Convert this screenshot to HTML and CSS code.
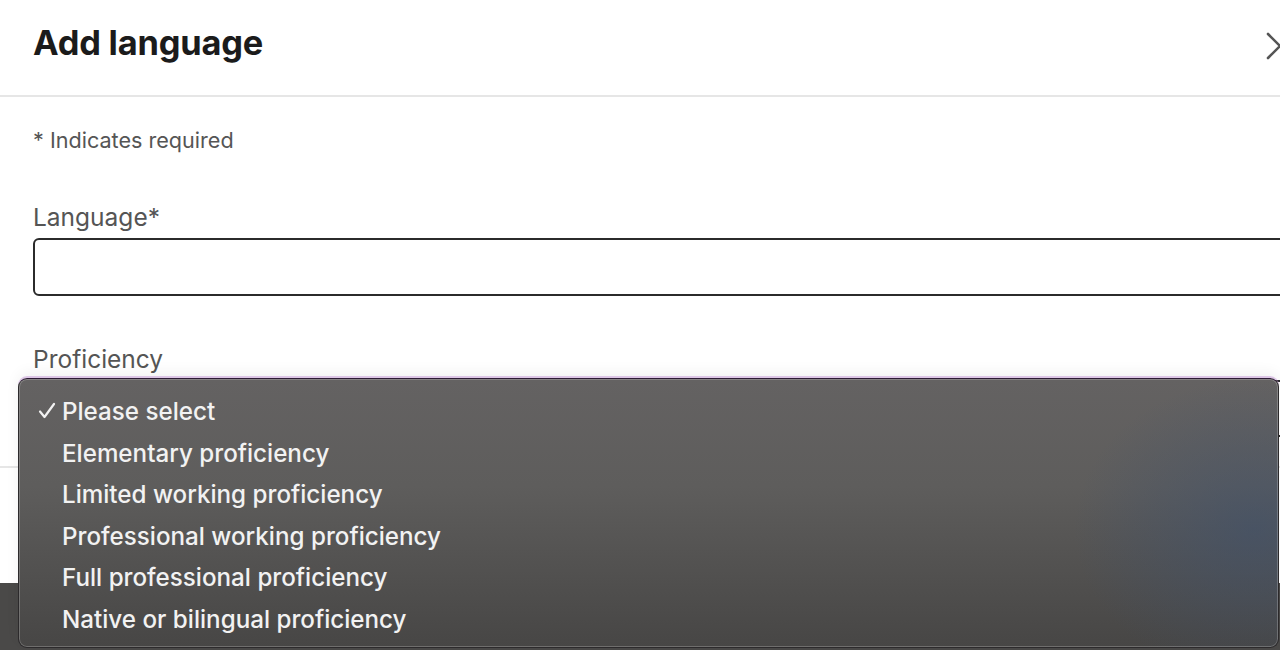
FILE: index.html
```html
<!DOCTYPE html>
<html lang="en">
<head>
<meta charset="utf-8">
<title>Add language</title>
<link rel="stylesheet" href="styles.css">
</head>
<body>
<div class="page">
  <div class="modal">
    <header class="modal-header">
      <h1 class="title">Add language</h1>
      <button class="close" aria-label="Dismiss">
        <svg width="28" height="28" viewBox="0 0 28 28"><path d="M2 2 L26 26 M26 2 L2 26" stroke="#555" stroke-width="2.6" stroke-linecap="round" fill="none"/></svg>
      </button>
    </header>
    <div class="modal-body">
      <p class="required">* Indicates required</p>
      <label class="field-label">Language*</label>
      <div class="input"></div>
      <label class="field-label prof">Proficiency</label>
      <div class="select"></div>
    </div>
    <div class="modal-footer"></div>
  </div>
  <ul class="dropdown">
    <li class="opt"><svg class="check" width="18" height="18" viewBox="0 0 18 18"><path d="M2 9.5 L6.5 15 L16 2" stroke="#f2f2f2" stroke-width="2.2" stroke-linecap="round" stroke-linejoin="round" fill="none"/></svg>Please select</li>
    <li class="opt">Elementary proficiency</li>
    <li class="opt">Limited working proficiency</li>
    <li class="opt">Professional working proficiency</li>
    <li class="opt">Full professional proficiency</li>
    <li class="opt">Native or bilingual proficiency</li>
  </ul>
</div>
</body>
</html>
```

FILE: styles.css
```css
html, body {
  margin: 0;
  padding: 0;
  height: 650px;
  overflow: hidden;
  font-family: Inter, "Noto Sans", "Liberation Sans", sans-serif;
}
.page {
  position: relative;
  width: 1280px;
  height: 650px;
  background: #4a4948;
  overflow: hidden;
}
.modal {
  width: 1310px;
  height: 583px;
  background: #fff;
  display: flex;
  flex-direction: column;
}
.modal-header {
  height: 97px;
  box-sizing: border-box;
  border-bottom: 2px solid #e6e6e6;
  display: flex;
  align-items: center;
  justify-content: space-between;
  padding: 0 16px 0 33px;
}
.title {
  margin: 0;
  font-size: 34.4px;
  font-weight: 700;
  color: #1b1b1b;
  letter-spacing: -0.2px;
  padding-bottom: 10px;
}
.close {
  border: 0;
  background: none;
  padding: 0;
  width: 28px;
  height: 28px;
  margin-bottom: 4px;
}
.modal-body {
  padding: 28px 0 0 33px;
  display: flex;
  flex-direction: column;
  height: 371px;
  box-sizing: border-box;
  border-bottom: 2px solid #e6e6e6;
}
.required {
  margin: 0;
  font-size: 21.6px;
  line-height: 30px;
  color: #555;
}
.field-label {
  font-size: 24.5px;
  line-height: 30px;
  color: #555;
  margin-top: 47px;
}
.prof { margin-top: 48px; }
.input {
  margin-top: 6px;
  height: 58px;
  box-sizing: border-box;
  border: 2px solid #2b2b2b;
  border-radius: 6px;
}
.select {
  margin-top: 6px;
  height: 57px;
  box-sizing: border-box;
  border: 2px solid #2b2b2b;
  border-radius: 6px;
}
.modal-footer { flex: 1; }
.dropdown {
  position: absolute;
  left: 18px;
  top: 378px;
  width: 1261px;
  height: 270px;
  box-sizing: border-box;
  margin: 0;
  padding: 12px 0 0 0;
  list-style: none;
  border: 1px solid #2c2a2c;
  border-top-color: #2d1a35;
  border-radius: 9px;
  background:
    radial-gradient(ellipse 180px 150px at 1235px 150px, rgba(60,80,110,0.55), rgba(60,80,110,0) 100%),
    linear-gradient(#646262, #5e5d5c 40%, #474645);
  box-shadow: inset 0 0 0 1px rgba(255,255,255,0.22), 0 -2px 0 rgba(190,140,210,0.45), 0 -6px 14px rgba(0,0,0,0.05);
}
.opt {
  position: relative;
  height: 41.6px;
  line-height: 41.6px;
  padding-left: 43px;
  font-size: 24.2px;
  font-weight: 500;
  color: #f2f2f2;
}
.check {
  position: absolute;
  left: 19px;
  top: 11px;
}
```
